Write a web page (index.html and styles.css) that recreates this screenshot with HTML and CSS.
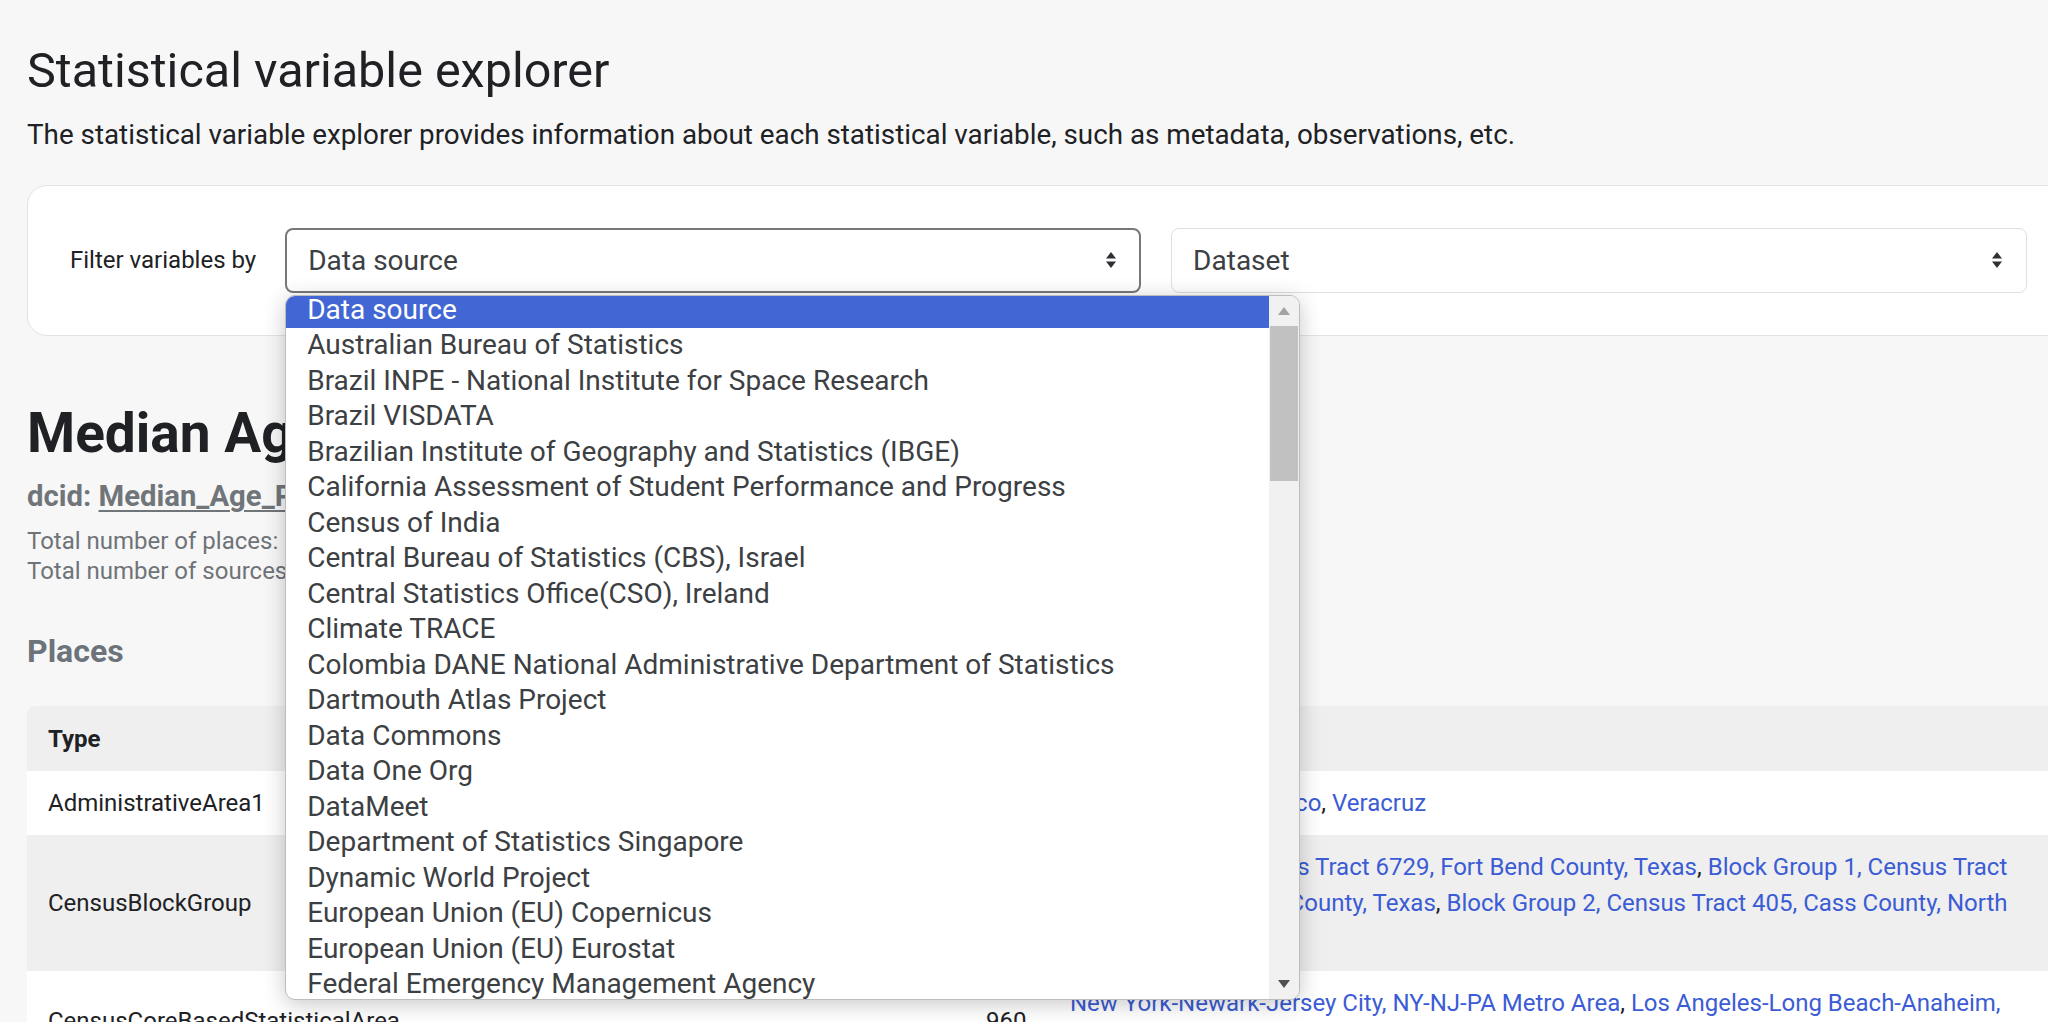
FILE: index.html
```html
<!DOCTYPE html>
<html lang="en">
<head>
<meta charset="utf-8">
<title>Statistical variable explorer</title>
<link rel="stylesheet" href="styles.css">
</head>
<body>
<main class="page">
  <h1 class="title">Statistical variable explorer</h1>
  <p class="subtitle">The statistical variable explorer provides information about each statistical variable, such as metadata, observations, etc.</p>

  <section class="filter-card">
    <span class="filter-label">Filter variables by</span>
    <div class="select-wrap">
      <div class="select select--open">
        <span class="select-value">Data source</span>
        <svg class="select-arrows" width="12" height="18" viewBox="0 0 12 18"><polygon points="1,7.5 6,1 11,7.5"/><polygon points="1,10.5 6,17 11,10.5"/></svg>
      </div>
      <div class="dropdown">
        <ul class="dropdown-list">
          <li class="option option--selected">Data source</li>
          <li class="option">Australian Bureau of Statistics</li>
          <li class="option">Brazil INPE - National Institute for Space Research</li>
          <li class="option">Brazil VISDATA</li>
          <li class="option">Brazilian Institute of Geography and Statistics (IBGE)</li>
          <li class="option">California Assessment of Student Performance and Progress</li>
          <li class="option">Census of India</li>
          <li class="option">Central Bureau of Statistics (CBS), Israel</li>
          <li class="option">Central Statistics Office(CSO), Ireland</li>
          <li class="option">Climate TRACE</li>
          <li class="option">Colombia DANE National Administrative Department of Statistics</li>
          <li class="option">Dartmouth Atlas Project</li>
          <li class="option">Data Commons</li>
          <li class="option">Data One Org</li>
          <li class="option">DataMeet</li>
          <li class="option">Department of Statistics Singapore</li>
          <li class="option">Dynamic World Project</li>
          <li class="option">European Union (EU) Copernicus</li>
          <li class="option">European Union (EU) Eurostat</li>
          <li class="option">Federal Emergency Management Agency</li>
        </ul>
        <div class="scrollbar">
          <div class="sb-btn"><svg width="12" height="8" viewBox="0 0 12 8"><polygon class="sb-arrow sb-arrow--off" points="0,8 6,0 12,8"/></svg></div>
          <div class="sb-thumb"></div>
          <div class="sb-track"></div>
          <div class="sb-btn"><svg width="12" height="8" viewBox="0 0 12 8"><polygon class="sb-arrow" points="0,0 6,8 12,0"/></svg></div>
        </div>
      </div>
    </div>
    <div class="select-wrap">
      <div class="select">
        <span class="select-value">Dataset</span>
        <svg class="select-arrows" width="12" height="18" viewBox="0 0 12 18"><polygon points="1,7.5 6,1 11,7.5"/><polygon points="1,10.5 6,17 11,10.5"/></svg>
      </div>
    </div>
  </section>

  <section class="sv">
    <h2 class="sv-title">Median Age of Population</h2>
    <div class="sv-dcid">dcid: <a class="sv-dcid-link" href="#">Median_Age_Person</a></div>
    <div class="sv-totals">
      <div>Total number of places: 112,853</div>
      <div>Total number of sources: 12</div>
    </div>
    <h3 class="sv-section">Places</h3>
    <table class="places-table">
      <colgroup>
        <col class="col-type">
        <col class="col-count">
        <col class="col-places">
      </colgroup>
      <thead>
        <tr><th>Type</th><th>Count</th><th>Places</th></tr>
      </thead>
      <tbody>
        <tr>
          <td>AdministrativeArea1</td>
          <td>32</td>
          <td class="places"><a href="#">Aguascalientes</a>, <a href="#">Jalisco</a>, <a href="#">Veracruz</a></td>
        </tr>
        <tr>
          <td>CensusBlockGroup</td>
          <td>217</td>
          <td class="places"><a href="#">Block Group 1, Census Tract 6729, Fort Bend County, Texas</a>, <a href="#">Block Group 1, Census Tract 9501, Nacogdoches County, Texas</a>, <a href="#">Block Group 2, Census Tract 405, Cass County, North Dakota</a></td>
        </tr>
        <tr>
          <td>CensusCoreBasedStatisticalArea</td>
          <td>960</td>
          <td class="places"><a href="#">New York-Newark-Jersey City, NY-NJ-PA Metro Area</a>, <a href="#">Los Angeles-Long Beach-Anaheim, CA Metro Area</a>, <a href="#">Chicago-Naperville-Elgin, IL-IN-WI Metro Area</a></td>
        </tr>
      </tbody>
    </table>
  </section>
</main>
</body>
</html>
```

FILE: styles.css
```css
html, body {
  margin: 0;
  padding: 0;
  overflow: hidden;
}

body {
  background: #f7f7f7;
  font-family: Roboto, "Liberation Sans", Arial, sans-serif;
  color: #202124;
}

.page {
  width: 2043px;
  padding: 42px 0 0 27px;
}

.title {
  margin: 0;
  font-size: 48.5px;
  line-height: 57.6px;
  font-weight: 400;
  color: #202124;
}

.subtitle {
  margin: 15px 0 30px;
  font-size: 27.8px;
  line-height: 40px;
  color: #202124;
}

/* Filter card */
.filter-card {
  display: flex;
  align-items: center;
  gap: 30px;
  padding: 42px;
  background: #fff;
  border: 1px solid #e0e3e7;
  border-radius: 20px;
}

.filter-label {
  font-size: 24px;
  color: #202124;
  white-space: nowrap;
  margin-right: -1px;
}

.select-wrap {
  position: relative;
  flex: 1;
}

.select {
  box-sizing: border-box;
  height: 65px;
  display: flex;
  align-items: center;
  justify-content: space-between;
  padding: 0 23px 0 21px;
  background: #fff;
  border: 1px solid #dcdfe3;
  border-radius: 8px;
  font-size: 28px;
  color: #3c4043;
}

.select--open {
  border: 2px solid #787878;
  padding-right: 22px;
}

.select-arrows polygon {
  fill: #2f3033;
}

/* Open dropdown */
.dropdown {
  position: absolute;
  top: calc(100% + 2px);
  left: 0;
  z-index: 10;
  box-sizing: border-box;
  width: 1015px;
  height: 705px;
  display: flex;
  background: #fff;
  border: 1px solid #bdbdbd;
  border-radius: 10px;
  box-shadow: 0 4px 22px rgba(0, 0, 0, 0.22);
  overflow: hidden;
}

.dropdown-list {
  flex: 1;
  margin: 0;
  padding: 0;
  list-style: none;
  overflow: hidden;
}

.option {
  box-sizing: border-box;
  height: 35.5px;
  padding: 0 21px 8.5px;
  font-size: 28px;
  line-height: 27px;
  color: #3c4043;
  white-space: nowrap;
}

.option--selected {
  background: linear-gradient(#4267d4 0 32px, transparent 32px);
  color: #fff;
}

.scrollbar {
  width: 30px;
  display: flex;
  flex-direction: column;
  background: #f1f1f1;
}

.sb-btn {
  height: 30px;
  display: flex;
  align-items: center;
  justify-content: center;
}

.sb-arrow {
  fill: #505050;
}

.sb-arrow--off {
  fill: #a3a3a3;
}

.sb-thumb {
  height: 155px;
  margin: 0 1px;
  background: #c1c1c1;
}

.sb-track {
  flex: 1;
}

/* Stat var details */
.sv-title {
  margin: 64px 0 0;
  font-size: 55px;
  line-height: 67.2px;
  font-weight: 700;
  color: #202124;
}

.sv-dcid {
  margin-top: 12px;
  font-size: 29.3px;
  line-height: 35.2px;
  font-weight: 700;
  color: #70757a;
}

.sv-dcid-link {
  color: inherit;
  text-decoration: underline;
  text-decoration-thickness: 2px;
  text-underline-offset: 4px;
}

.sv-totals {
  margin-top: 12px;
  font-size: 24px;
  line-height: 30px;
  color: #6f7378;
}

.sv-section {
  margin: 46px 0 0;
  font-size: 32px;
  line-height: 38.4px;
  font-weight: 700;
  color: #6c737a;
}

.places-table {
  margin-top: 36px;
  width: 2043px;
  table-layout: fixed;
  border-collapse: separate;
  border-spacing: 0;
  font-size: 24px;
  line-height: 36px;
  color: #202124;
}

.col-type { width: 938px; }
.col-count { width: 84px; }
.col-places { width: 1021px; }

.places-table th {
  text-align: left;
  font-weight: 700;
  padding: 14.5px 21px;
  background: #efefef;
}

.places-table th:first-child {
  border-top-left-radius: 8px;
}

.places-table th:last-child {
  border-top-right-radius: 8px;
}

.places-table td {
  padding: 14px 21px;
  vertical-align: middle;
  background: #fff;
}

.places-table tbody tr:nth-child(even) td {
  background: #efefef;
}

.places-table td.places {
  padding-right: 40px;
  vertical-align: top;
}

.places a {
  color: #3b5cd4;
  text-decoration: none;
}
```
